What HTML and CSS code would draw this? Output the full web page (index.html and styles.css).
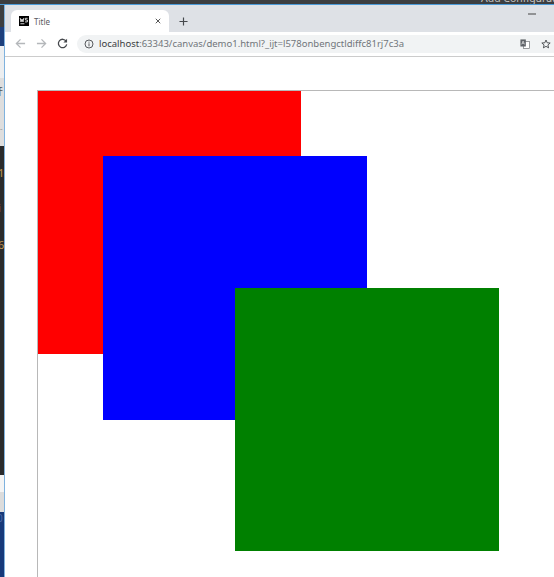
FILE: index.html
```html
<!DOCTYPE html>
<html lang="en">
<head>
<meta charset="utf-8">
<title>Title</title>
<link rel="stylesheet" href="styles.css">
</head>
<body>
<div class="ide-top"><span class="ide-config">Add Configuration...</span></div>
<div class="desk">
  <aside class="ide-left">
    <div class="seg seg-dark"></div>
    <div class="seg seg-navy"></div>
    <div class="seg seg-pale"></div>
    <div class="seg seg-gray"><span class="frag frag-a">开</span><span class="frag frag-b">–</span></div>
    <div class="seg seg-code"><span class="code-c">1</span><span class="code-c code-2">i</span><span class="code-c code-3">6</span></div>
    <div class="seg seg-white"></div>
    <div class="seg seg-light"></div>
    <div class="seg seg-blue"><span class="frag frag-c">0</span></div>
  </aside>
  <main class="browser">
    <div class="tabstrip">
      <div class="tab">
        <svg class="favicon" viewBox="0 0 10 10"><rect width="10" height="10" fill="#000"/><rect x="1.4" y="7.4" width="4" height="0.8" fill="#fff"/><path d="M1.2 2 2 6 3 3 4 6 4.8 2" fill="none" stroke="#fff" stroke-width=".8"/><path d="M8.6 2.3H6.4V4H8.4V5.9H6" fill="none" stroke="#fff" stroke-width=".8"/></svg>
        <span class="tab-title">Title</span>
        <svg class="tab-close" viewBox="0 0 8 8"><path d="M1 1 7 7M7 1 1 7" stroke="#444" stroke-width="1.2"/></svg>
      </div>
      <svg class="new-tab" viewBox="0 0 10 10"><path d="M5 .5V9.500M.5 5H9.500" stroke="#45484c" stroke-width="1.300"/></svg>
      <svg class="minimize" viewBox="0 0 8 2"><path d="M0 1H8" stroke="#444" stroke-width="1"/></svg>
    </div>
    <div class="toolbar">
      <svg class="nav nav-back" viewBox="0 0 12 12"><path d="M11 6H1.500M6 1.500 1.500 6 6 10.500" fill="none" stroke="#b4b7ba" stroke-width="1.400"/></svg>
      <svg class="nav nav-fwd" viewBox="0 0 12 12"><path d="M1 6H10.500M6 1.500 10.500 6 6 10.500" fill="none" stroke="#b4b7ba" stroke-width="1.400"/></svg>
      <svg class="nav nav-reload" viewBox="0 0 12 12"><path d="M10 3.500A4.600 4.600 0 1 0 10.600 7" fill="none" stroke="#45484c" stroke-width="1.400"/><path d="M11 .8V4.800H7Z" fill="#45484c"/></svg>
      <div class="omnibox">
        <svg class="info" viewBox="0 0 12 12"><circle cx="6" cy="6" r="4.800" fill="none" stroke="#4a4d50" stroke-width="1.100"/><path d="M6 5.200V8.800M6 3.200V4.400" stroke="#4a4d50" stroke-width="1.100"/></svg>
        <span class="url"><span class="url-host">localhost</span>:63343/canvas/demo1.html?_ijt=l578onbengctldiffc81rj7c3a</span>
        <svg class="translate" viewBox="0 0 12 12"><rect x="4" y="3" width="7.500" height="8.500" fill="#fff" stroke="#6a6d70" stroke-width=".8"/><rect x=".5" y=".5" width="6.500" height="8.500" fill="#5f6368"/><path d="M2 6.500 3.700 2.500 5.400 6.500M2.700 5.200H4.700" fill="none" stroke="#fff" stroke-width=".7"/></svg>
        <svg class="star" viewBox="0 0 12 12"><path d="M6 1.200 7.400 4.500 11 4.800 8.300 7.100 9.100 10.600 6 8.800 2.900 10.600 3.700 7.100 1 4.800 4.600 4.500Z" fill="none" stroke="#45484c" stroke-width="1.100"/></svg>
      </div>
    </div>
    <div class="page">
      <div class="canvas">
        <div class="square square-red"></div>
        <div class="square square-blue"></div>
        <div class="square square-green"></div>
      </div>
    </div>
  </main>
</div>
</body>
</html>
```
FILE: styles.css
```css
* { box-sizing: border-box; }
html, body { margin: 0; height: 100%; overflow: hidden; }
body {
  display: flex;
  flex-direction: column;
  width: 554px;
  height: 577px;
  font-family: "Noto Sans", "Noto Sans CJK SC", sans-serif;
  background: #fff;
}
.ide-top {
  height: 5px;
  flex: none;
  background: #3c3e40;
  border-bottom: 1px solid #4a9ad8;
  position: relative;
  overflow: hidden;
}
.ide-config {
  position: absolute;
  left: 481px;
  top: -9px;
  font-size: 10.500px;
  line-height: 14px;
  color: #c4c4c4;
  white-space: nowrap;
}
.desk { flex: 1; display: flex; min-height: 0; }
.ide-left { width: 5px; flex: none; display: flex; flex-direction: column; border-right: 1px solid #7fb2de; overflow: hidden; }
.seg { flex: none; position: relative; overflow: hidden; }
.seg-dark { height: 22px; background: #3c3e40; }
.seg-navy { height: 19px; background: #1d3f7c; }
.seg-pale { height: 32px; background: #eceef0; }
.seg-gray { height: 68px; background: #dedede; }
.seg-code { height: 329px; background: #2a2b2c; }
.seg-white { height: 17px; background: #f4f4f4; }
.seg-light { height: 20px; background: #dcdcdc; }
.seg-blue { flex: 1; background: #17397a; }
.frag { position: absolute; left: -7px; font-size: 10px; line-height: 12px; color: #555; }
.frag-a { top: 7px; }
.frag-b { top: 45px; left: 0; font-size: 5px; color: #777; }
.frag-c { top: 0; left: -3px; color: #4a6aa8; }
.code-c { position: absolute; left: -2px; top: 21px; font-size: 11px; line-height: 12px; color: #c09550; }
.code-2 { top: 56px; }
.code-3 { top: 93px; }
.browser { flex: 1; min-width: 0; display: flex; flex-direction: column; }
.tabstrip {
  height: 27px;
  flex: none;
  background: #dee1e6;
  display: flex;
  align-items: flex-end;
  padding-left: 6px;
}
.tab {
  width: 158px;
  height: 22px;
  background: #fff;
  border-radius: 6px 6px 0 0;
  display: flex;
  align-items: center;
  padding: 0 8px 0 8px;
}
.favicon { width: 10px; height: 10px; flex: none; }
.tab-title { margin-left: 5px; flex: 1; font-size: 8px; color: #5a5a62; }
.tab-close { width: 6px; height: 6px; }
.new-tab { width: 9px; height: 9px; margin: 0 0 6px 10px; }
.minimize { width: 8px; height: 2px; margin: 0 18px 17px auto; }
.toolbar {
  height: 25px;
  flex: none;
  background: #fff;
  border-bottom: 1px solid #ccc;
  display: flex;
  align-items: center;
  padding: 0 0 1px 10px;
}
.nav { width: 11px; height: 11px; flex: none; }
.nav-fwd { margin-left: 10px; }
.nav-reload { margin-left: 10px; }
.omnibox {
  margin-left: 9px;
  flex: 1;
  height: 18px;
  background: #f1f3f4;
  border-radius: 9px 0 0 9px;
  display: flex;
  align-items: center;
  padding: 0 3px 0 7px;
}
.info { width: 10px; height: 10px; flex: none; }
.url { margin-left: 5px; flex: 1; font-size: 9.500px; color: #70757a; white-space: nowrap; }
.url-host { color: #3a3c3f; }
.translate { width: 10px; height: 10px; flex: none; margin-right: 11px; }
.star { width: 10px; height: 10px; flex: none; }
.page { flex: 1; min-height: 0; padding: 33px 0 0 32px; overflow: hidden; }
.canvas {
  position: relative;
  height: 600px;
  width: 600px;
  border-top: 1px solid #b8b8b8;
  border-left: 1px solid #b8b8b8;
}
.square { position: absolute; }
.square-red { left: 0; top: 0; width: 263px; height: 263px; background: #f00; }
.square-blue { left: 65px; top: 65px; width: 264px; height: 264px; background: #00f; }
.square-green { left: 197px; top: 197px; width: 264px; height: 263px; background: #008000; }
```
